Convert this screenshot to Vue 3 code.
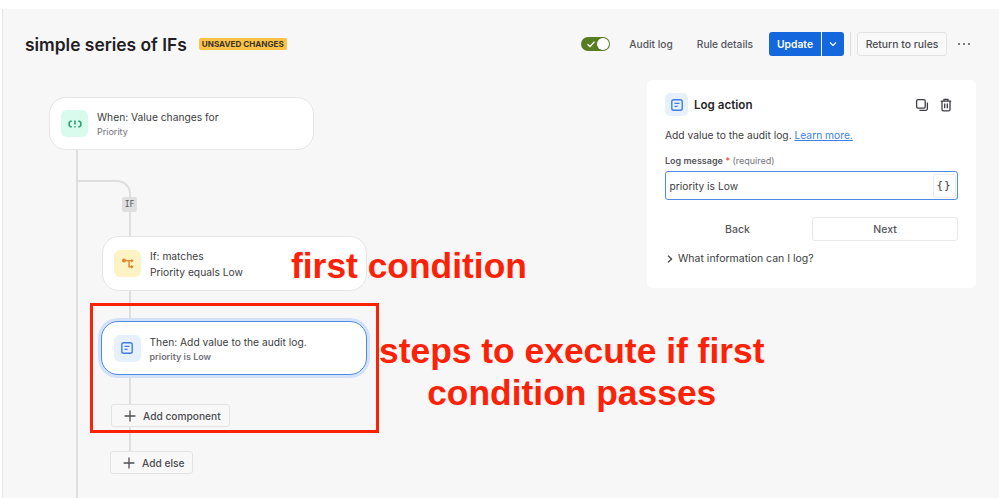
<template>
  <div class="page">
    <div class="main">
      <header class="header">
        <div class="title-wrap">
          <h1 class="title">simple series of IFs</h1>
          <span class="badge">UNSAVED CHANGES</span>
        </div>
        <div class="actions">
          <span class="toggle">
            <svg class="toggle-check" width="10" height="10" viewBox="0 0 10 10"><path d="M1.5 5.2 4 7.5 8.5 2.6" /></svg>
            <span class="toggle-knob"></span>
          </span>
          <a class="link audit">Audit log</a>
          <a class="link details">Rule details</a>
          <div class="split">
            <button class="split-main">Update</button>
            <button class="split-arrow">
              <svg width="10" height="10" viewBox="0 0 10 10"><path d="M2 3.5 5 6.5 8 3.5" /></svg>
            </button>
          </div>
          <span class="divider"></span>
          <button class="btn return">Return to rules</button>
          <span class="dots"><i></i><i></i><i></i></span>
        </div>
      </header>

      <div class="body">
        <section class="canvas">
          <span class="line line-main"></span>
          <span class="line-branch"></span>
          <span class="line line-sub"></span>
          <span class="if-tag">IF</span>

          <div class="node node-when">
            <span class="node-icon icon-green">
              <svg width="14" height="14" viewBox="0 0 14 14"><path d="M3.8 4.2H2.6L1.2 5.4V8.6L2.6 9.8H3.8M10.2 4.2H11.4L12.8 5.4V8.6L11.4 9.8H10.2M7 3.4V7.6M7 9.2V10.6" /></svg>
            </span>
            <div class="node-text">
              <div class="node-title">When: Value changes for</div>
              <div class="node-sub">Priority</div>
            </div>
          </div>

          <div class="node node-if">
            <span class="node-icon icon-yellow">
              <svg width="14" height="14" viewBox="0 0 14 14"><path d="M3 3.6H11M8 3.6V9.8H11M10.2 2.6 11.6 3.8 10.2 5M10.2 8.6 11.6 9.8 10.2 11" /><circle cx="3" cy="3.6" r="1.3" /></svg>
            </span>
            <div class="node-text">
              <div class="node-title">If: matches</div>
              <div class="node-title second">Priority equals Low</div>
            </div>
          </div>

          <div class="node node-then">
            <span class="node-icon icon-blue">
              <svg width="14" height="14" viewBox="0 0 14 14"><rect x="1.8" y="1.8" width="10.4" height="10.4" rx="1.8" /><path d="M4.5 5.4H9.5M4.5 8.4H7.6" /></svg>
            </span>
            <div class="node-text">
              <div class="node-title">Then: Add value to the audit log.</div>
              <div class="node-sub strong">priority is Low</div>
            </div>
          </div>

          <button class="btn add add-component">
            <svg width="14" height="14" viewBox="0 0 14 14"><path d="M7 1.6V12.4M1.6 7H12.4" /></svg>
            Add component
          </button>
          <button class="btn add add-else">
            <svg width="14" height="14" viewBox="0 0 14 14"><path d="M7 1.6V12.4M1.6 7H12.4" /></svg>
            Add else
          </button>
        </section>

        <aside class="panel">
          <div class="panel-head">
            <span class="panel-icon">
              <svg width="14" height="14" viewBox="0 0 14 14"><rect x="1.8" y="1.8" width="10.4" height="10.4" rx="1.8" /><path d="M4.5 5.4H9.5M4.5 8.4H7.6" /></svg>
            </span>
            <span class="panel-title">Log action</span>
            <span class="panel-tools">
              <svg width="14" height="14" viewBox="0 0 14 14"><rect x="1.6" y="1.6" width="8.6" height="8.6" rx="1.4" /><path d="M12.4 4.4V10.6A1.8 1.8 0 0 1 10.6 12.4H4.4" /></svg>
              <svg width="14" height="14" viewBox="0 0 14 14"><path d="M1.8 3.2H12.2M5 3.2V1.4H9V3.2M3 3.2V11.4A1.4 1.4 0 0 0 4.4 12.8H9.6A1.4 1.4 0 0 0 11 11.4V3.2M5.7 5.6V10.2M8.3 5.6V10.2" /></svg>
            </span>
          </div>
          <p class="panel-desc">Add value to the audit log. <a class="learn">Learn more.</a></p>
          <div class="field-label"><b>Log message</b> <em>*</em> <span>(required)</span></div>
          <div class="field">
            <span class="field-value">priority is Low</span>
            <span class="braces">{}</span>
          </div>
          <div class="panel-nav">
            <button class="nav-back">Back</button>
            <button class="nav-next">Next</button>
          </div>
          <div class="more">
            <svg width="10" height="10" viewBox="0 0 10 10"><path d="M3 1.6 6.6 5 3 8.4" /></svg>
            What information can I log?
          </div>
        </aside>
      </div>

      <!-- annotations drawn on top of the screenshot -->
      <div class="note-box"></div>
      <div class="note note-first">first condition</div>
      <div class="note note-steps">steps to execute if first<br />condition passes</div>
    </div>
  </div>
</template>

<script setup>
</script>

<style>
html, body {
  margin: 0;
  overflow: hidden;
  background: #fff;
}
</style>

<style scoped>
.page {
  width: 999px;
  height: 498px;
  padding-top: 9px;
  padding-left: 2px;
  box-sizing: border-box;
  background: #fff;
  font-family: Inter, "Liberation Sans", sans-serif;
  color: #2d2e33;
  overflow: hidden;
}

.main {
  position: relative;
  height: 489px;
  background: #f7f7f8;
  border-left: 1px solid #e6e6e8;
  overflow: hidden;
}

button {
  font-family: inherit;
  cursor: pointer;
}

.header {
  display: flex;
  align-items: center;
  justify-content: space-between;
  height: 24px;
  padding: 23px 29px 0 22px;
}

.title-wrap {
  display: flex;
  align-items: center;
  gap: 12px;
}

.title {
  margin: 0;
  font-size: 17.4px;
  font-weight: 600;
  color: #1f2024;
}

.badge {
  padding: 0 3px;
  height: 12px;
  line-height: 12px;
  font-size: 8.1px;
  font-weight: 700;
  border-radius: 2px;
  background: #fac246;
  color: #3a3428;
}

.actions {
  display: flex;
  align-items: center;
}

.toggle {
  position: relative;
  display: block;
  width: 29px;
  height: 14px;
  border-radius: 8px;
  background: #567d21;
}

.toggle-check {
  position: absolute;
  left: 5px;
  top: 2px;
  fill: none;
  stroke: #fff;
  stroke-width: 1.4;
}

.toggle-knob {
  position: absolute;
  right: 1px;
  top: 1px;
  width: 12px;
  height: 12px;
  border-radius: 50%;
  background: #fff;
}

.link {
  font-size: 10.2px;
  font-weight: 500;
  color: #55565c;
}

.audit {
  margin-left: 19px;
}

.details {
  margin-left: 24px;
}

.split {
  display: flex;
  margin-left: 16px;
  height: 24px;
}

.split-main,
.split-arrow {
  border: 0;
  background: #1467dc;
  color: #fff;
  padding: 0;
}

.split-main {
  width: 52px;
  font-size: 10.3px;
  font-weight: 600;
  border-radius: 3px 0 0 3px;
}

.split-arrow {
  display: flex;
  align-items: center;
  justify-content: center;
  margin-left: 1px;
  width: 22px;
  border-radius: 0 3px 3px 0;
}

.split-arrow svg {
  fill: none;
  stroke: #fff;
  stroke-width: 1.2;
}

.divider {
  width: 1px;
  height: 24px;
  margin: 0 6px 0 6px;
  background: #dcdcde;
}

.btn {
  background: #f9f9fa;
  border: 1px solid #e3e3e5;
  border-radius: 3px;
  color: #4c4d52;
  font-weight: 500;
  padding: 0;
}

.return {
  width: 90px;
  height: 24px;
  font-size: 10.4px;
}

.dots {
  display: flex;
  gap: 3px;
  margin-left: 11px;
}

.dots i {
  display: block;
  width: 2px;
  height: 2px;
  border-radius: 50%;
  background: #55565c;
}

.body {
  display: flex;
  justify-content: space-between;
}

.canvas {
  position: relative;
  width: 400px;
  height: 442px;
  padding-top: 41px;
  box-sizing: border-box;
}

.node {
  display: flex;
  align-items: center;
  gap: 9px;
  box-sizing: border-box;
  width: 265px;
  padding-left: 11px;
  background: #fff;
  border: 1px solid #e5e5e7;
  border-radius: 17px;
  position: relative;
}

.node-when {
  height: 53px;
  margin-left: 46px;
}

.node-if {
  height: 55px;
  margin-left: 99px;
  margin-top: 86px;
}

.node-then {
  height: 54px;
  margin-left: 98px;
  margin-top: 30px;
  width: 266px;
  padding-left: 11.5px;
  border: 1.5px solid #4f8ae6;
  box-shadow: 0 0 0 3px #d3e2fa;
}

.node-icon {
  display: flex;
  align-items: center;
  justify-content: center;
  flex: none;
  width: 27px;
  height: 27px;
  border-radius: 6px;
}

.node-icon svg,
.panel-icon svg,
.panel-tools svg,
.add svg,
.more svg {
  fill: none;
  stroke-width: 1.3;
}

.icon-green {
  background: #d9fbee;
}

.icon-green svg {
  stroke: #2f9e73;
  stroke-width: 1.6;
}

.icon-yellow {
  background: #fdf3c4;
}

.icon-yellow svg {
  stroke: #e7812b;
  stroke-width: 1.4;
}

.icon-yellow circle {
  fill: #e7812b;
}

.icon-blue,
.panel-icon {
  background: #e7f0fd;
}

.icon-blue svg,
.panel-icon svg {
  stroke: #3f7fe4;
  stroke-width: 1.4;
}

.node-text {
  padding-top: 1px;
}

.node-title {
  font-size: 10.25px;
  line-height: 14px;
  color: #3c3d42;
}

.node-title.second {
  margin-top: 2px;
}

.node-sub {
  margin-top: 1px;
  font-size: 9px;
  line-height: 13px;
  color: #72737a;
}

.node-sub.strong {
  font-weight: 600;
}

.line {
  position: absolute;
  width: 2px;
  background: #dededf;
}

.line-main {
  left: 73px;
  top: 90px;
  bottom: 0;
}

.line-branch {
  position: absolute;
  left: 74px;
  top: 124px;
  width: 54px;
  height: 20px;
  box-sizing: border-box;
  border-top: 2px solid #dededf;
  border-right: 2px solid #dededf;
  border-top-right-radius: 14px;
}

.line-sub {
  left: 126px;
  top: 144px;
  height: 251px;
}

.if-tag {
  position: absolute;
  left: 119px;
  top: 141px;
  width: 15px;
  height: 15px;
  line-height: 15px;
  text-align: center;
  font-family: "DejaVu Sans Mono", monospace;
  font-size: 8px;
  border-radius: 2px;
  background: #dfdfe2;
  color: #55565c;
}

.add {
  position: relative;
  display: flex;
  align-items: center;
  height: 23px;
  font-size: 10.2px;
  background: #f8f8f9;
}

.add svg {
  stroke: #4c4d52;
  margin: 0 6px 0 11px;
}

.add-component {
  width: 119px;
  margin-left: 108px;
  margin-top: 29px;
}

.add-else {
  width: 83px;
  margin-left: 107px;
  margin-top: 24px;
}

.panel {
  box-sizing: border-box;
  width: 329px;
  height: 208px;
  margin: 24px 23px 0 0;
  padding: 13px 18px 0;
  background: #fff;
  border-radius: 6px;
}

.panel-head {
  display: flex;
  align-items: center;
  height: 23px;
}

.panel-icon {
  display: flex;
  align-items: center;
  justify-content: center;
  width: 23px;
  height: 23px;
  border-radius: 5px;
}

.panel-title {
  margin-left: 6px;
  font-size: 11.6px;
  font-weight: 600;
  color: #26272b;
}

.panel-tools {
  display: flex;
  gap: 10px;
  margin-left: auto;
  margin-right: 5px;
}

.panel-tools svg {
  stroke: #3c3d42;
}

.panel-desc {
  margin: 12px 0 0;
  font-size: 10.25px;
  line-height: 14px;
  color: #3c3d42;
}

.learn {
  color: #3a7fe6;
  text-decoration: underline;
}

.field-label {
  margin-top: 13px;
  font-size: 9px;
  line-height: 12px;
  color: #72737a;
}

.field-label b {
  font-weight: 600;
  color: #55565c;
}

.field-label em {
  font-style: normal;
  color: #d8362a;
}

.field {
  display: flex;
  align-items: center;
  justify-content: space-between;
  box-sizing: border-box;
  width: 293px;
  height: 29px;
  margin-top: 4px;
  padding: 0 1.5px 0 3.5px;
  border: 1.5px solid #4f8ae6;
  border-radius: 3px;
}

.field-value {
  font-size: 10.25px;
  color: #3c3d42;
}

.braces {
  display: block;
  width: 23px;
  height: 24px;
  line-height: 22px;
  text-align: center;
  box-sizing: border-box;
  border: 1px solid #ececee;
  border-radius: 2px;
  font-family: "DejaVu Sans Mono", monospace;
  font-size: 11px;
  letter-spacing: 1px;
  color: #3c3d42;
}

.panel-nav {
  display: flex;
  margin-top: 17px;
  height: 24px;
}

.panel-nav button {
  width: 146px;
  padding: 0;
  font-size: 10.5px;
  font-weight: 500;
  color: #55565c;
  background: #fff;
  border: 1px solid transparent;
  border-radius: 3px;
}

.panel-nav .nav-back {
  width: 145px;
}

.panel-nav .nav-next {
  margin-left: 2px;
  border-color: #e8e8ea;
}

.more {
  display: flex;
  align-items: center;
  gap: 3px;
  margin-top: 11px;
  font-size: 10.5px;
  line-height: 14px;
  color: #3c3d42;
}

.more svg {
  stroke: #3c3d42;
}

.note-box {
  position: absolute;
  left: 87px;
  top: 294px;
  width: 289px;
  height: 130px;
  box-sizing: border-box;
  border: 3px solid #fc2207;
}

.note {
  position: absolute;
  font-family: "Liberation Sans", Arial, sans-serif;
  font-weight: 700;
  color: #fc2207;
  font-size: 35.4px;
  line-height: 42px;
  white-space: nowrap;
}

.note-first {
  left: 288px;
  top: 236px;
}

.note-steps {
  left: 376px;
  top: 321px;
  text-align: center;
}
</style>
